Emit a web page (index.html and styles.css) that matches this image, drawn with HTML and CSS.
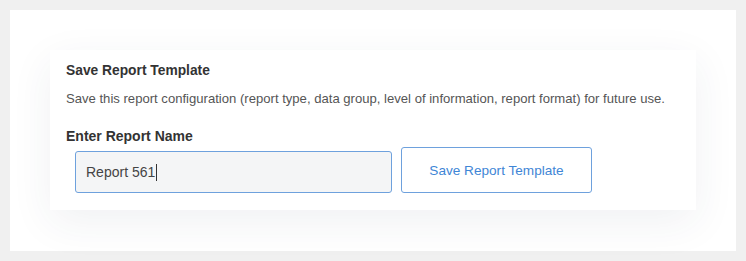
FILE: index.html
```html
<!DOCTYPE html>
<html lang="en">
<head>
    <meta charset="UTF-8">
    <meta name="viewport" content="width=device-width, initial-scale=1.0">
    <title>Save Report Template</title>
    <link rel="stylesheet" href="styles.css">
</head>
<body>
    <div class="frame">
        <div class="card">
            <h2 class="title">Save Report Template</h2>
            <p class="desc">Save this report configuration (report type, data group, level of information, report format) for future use.</p>
            <label class="label" for="name">Enter Report Name</label>
            <div class="row">
                <div class="field" id="name" role="textbox">Report 561<span class="caret"></span></div>
                <button class="btn">Save Report Template</button>
            </div>
        </div>
    </div>
</body>
</html>
```

FILE: styles.css
```css
*{margin: 0px;padding: 0px;box-sizing: border-box;}
body{
    background: #f0f0f0;
    padding: 10px;
    font-family: "Liberation Sans", Arial, sans-serif;
    color: #333;
}
.frame{
    background: #fff;
    height: 241px;
    padding: 40px;
}
.card{
    height: 160px;
    width: 646px;
    background: #fff;
    padding: 13px 16px 0px;
    box-shadow: 0px 12px 40px rgba(40, 50, 80, 0.07);
}
.title{
    font-size: 13.8px;
    line-height: 16px;
    font-weight: bold;
    color: #333;
}
.desc{
    margin-top: 12px;
    font-size: 13.1px;
    line-height: 16px;
    color: #555;
}
.label{
    display: block;
    margin-top: 20px;
    font-size: 14px;
    line-height: 18px;
    font-weight: bold;
    color: #333;
}
.row{
    display: flex;
    align-items: flex-end;
    gap: 9px;
    margin-top: 2px;
    padding-left: 9px;
}
.field{
    display: flex;
    align-items: center;
    width: 317px;
    height: 42px;
    padding: 0px 10px;
    background: #f4f5f6;
    border: 1px solid #6ea1dd;
    border-radius: 3px;
    font-size: 14px;
    color: #444;
}
.caret{
    display: inline-block;
    width: 1px;
    height: 17px;
    margin-left: 1px;
    background: #333;
}
.btn{
    width: 191px;
    height: 46px;
    background: #fff;
    border: 1px solid #6ea1dd;
    border-radius: 3px;
    font-family: inherit;
    font-size: 13.6px;
    color: #3f86d6;
}
```
